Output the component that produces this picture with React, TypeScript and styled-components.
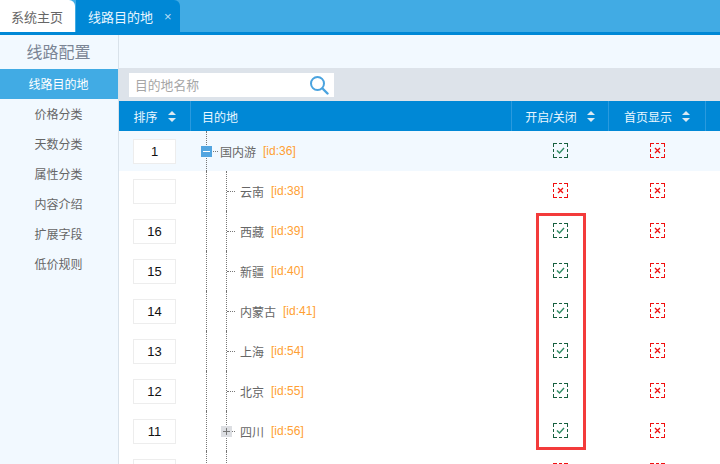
import React from "react";
import styled, { createGlobalStyle } from "styled-components";

const Global = createGlobalStyle`
  html, body { margin: 0; padding: 0; background: #fff; }
  body { font-family: "Liberation Sans", "Noto Sans CJK SC", sans-serif; }
`;

const Page = styled.div`
  position: relative;
  width: 720px;
  height: 464px;
  overflow: hidden;
  display: flex;
  flex-direction: column;
`;

const TabBar = styled.div`
  height: 32px;
  flex: none;
  display: flex;
  gap: 1px;
  background: #41abe4;
  border-bottom: 3px solid #0088d6;
`;

const Tab = styled.div<{ $active?: boolean }>`
  box-sizing: border-box;
  height: 32px;
  width: ${({ $active }) => ($active ? "104px" : "75px")};
  padding-left: ${({ $active }) => ($active ? "12px" : "11px")};
  display: flex;
  align-items: center;
  gap: 11px;
  font-size: 13px;
  border-radius: 0 6px 0 0;
  background: ${({ $active }) => ($active ? "#0088d6" : "#fff")};
  color: ${({ $active }) => ($active ? "#e8f6ff" : "#666")};
`;

const TabClose = styled.span`
  font-size: 13px;
  color: #b5ddf5;
`;

const Body = styled.div`
  flex: 1;
  display: flex;
  min-height: 0;
`;

const Sidebar = styled.div`
  width: 118px;
  flex: none;
  background: #f2f9ff;
  border-right: 1px solid #d9e2ea;
`;

const SideTitle = styled.div`
  height: 34px;
  line-height: 36px;
  padding-right: 1px;
  text-align: center;
  font-size: 16px;
  color: #7b8595;
`;

const SideItem = styled.div<{ $active?: boolean }>`
  height: 30px;
  line-height: 32px;
  padding-right: 1px;
  text-align: center;
  font-size: 12px;
  color: ${({ $active }) => ($active ? "#fff" : "#666")};
  background: ${({ $active }) => ($active ? "#41abe4" : "transparent")};
`;

const Main = styled.div`
  flex: 1;
  min-width: 0;
`;

const TopStrip = styled.div`
  height: 33px;
  background: #f2f9ff;
`;

const SearchBar = styled.div`
  height: 33px;
  box-sizing: border-box;
  padding: 5px 0 0 10px;
  background: #dde3ea;
`;

const SearchBox = styled.div`
  box-sizing: border-box;
  width: 205px;
  height: 24px;
  padding: 0 5px 0 6px;
  display: flex;
  align-items: center;
  justify-content: space-between;
  background: #fff;
  font-size: 12.8px;
  color: #a6a6a6;
`;

const Placeholder = styled.span`
  padding-bottom: 2px;
`;

const Grid = "72px 321px 97px 97px 1fr";

const HeadRow = styled.div`
  height: 30px;
  display: grid;
  grid-template-columns: ${Grid};
  background: #0088d6;
  color: #eaf7ff;
  font-size: 12px;
`;

const HeadCell = styled.div<{ $left?: boolean }>`
  box-sizing: border-box;
  display: flex;
  align-items: center;
  justify-content: ${({ $left }) => ($left ? "flex-start" : "center")};
  gap: 10px;
  padding-left: ${({ $left }) => ($left ? "11px" : "0")};
  border-right: 1px solid #2a9ade;
  &:last-child { border-right: 0; }
`;

const Row = styled.div<{ $shade?: boolean }>`
  height: 40px;
  flex: none;
  display: grid;
  grid-template-columns: ${Grid};
  align-items: center;
  background: ${({ $shade }) => ($shade ? "#f2f9ff" : "#fff")};
`;

const SortInput = styled.div`
  box-sizing: border-box;
  width: 43px;
  height: 25px;
  margin-left: 14px;
  background: #fff;
  border: 1px solid #ededed;
  text-align: center;
  line-height: 23px;
  font-size: 13px;
  color: #111;
`;

const TreeCell = styled.div<{ $depth: number }>`
  position: relative;
  height: 40px;
  display: flex;
  align-items: center;
  font-size: 12px;
  color: #666;
  padding-left: ${({ $depth }) => ($depth === 0 ? "29px" : "49px")};
  &::before {
    content: "";
    position: absolute;
    left: 15px;
    top: 0;
    bottom: 0;
    border-left: 1px dotted #777;
  }
  ${({ $depth }) =>
    $depth > 0 &&
    `&::after {
      content: "";
      position: absolute;
      left: 35px;
      top: 0;
      bottom: 0;
      border-left: 1px dotted #777;
    }`}
`;

const Branch = styled.span<{ $left: number }>`
  position: absolute;
  left: ${({ $left }) => $left}px;
  top: 20px;
  width: 8px;
  border-top: 1px dotted #777;
`;

const Toggle = styled.span<{ $open?: boolean; $left: number }>`
  position: absolute;
  z-index: 1;
  left: ${({ $left }) => $left}px;
  top: 15px;
  width: 11px;
  height: 11px;
  background: ${({ $open }) => ($open ? "#52a5e0" : "#dcdee2")};
  &::before, &::after {
    content: "";
    position: absolute;
    background: ${({ $open }) => ($open ? "#fff" : "#777")};
  }
  &::before { left: 2px; right: 2px; top: 5px; height: 1px; }
  &::after {
    display: ${({ $open }) => ($open ? "none" : "block")};
    top: 2px; bottom: 2px; left: 5px; width: 1px;
  }
`;

const NodeId = styled.span`
  margin-left: 7px;
  color: #ff9f33;
`;

const IconCell = styled.div`
  display: flex;
  justify-content: center;
  padding-bottom: 1px;
`;

const Highlight = styled.div`
  position: absolute;
  left: 536px;
  top: 213px;
  width: 50px;
  height: 237px;
  box-sizing: border-box;
  border: 3px solid #f33b3b;
`;

const SearchIcon = () => (
  <svg width="20" height="20" viewBox="0 0 20 20" fill="none" stroke="#4aa3df" strokeWidth="2">
    <circle cx="8.5" cy="8.5" r="6.5" />
    <path d="M13.5 13.5 L18.5 18.5" strokeLinecap="round" strokeWidth="2.4" />
  </svg>
);

const SortArrows = ({ color = "#dce9f2" }: { color?: string }) => (
  <svg width="8" height="11" viewBox="0 0 8 11" fill={color}>
    <path d="M4 0 L8 4 H0 Z M0 7 H8 L4 11 Z" />
  </svg>
);

const StatusBox = ({ on }: { on: boolean }) => {
  const color = on ? "#17603f" : "#f01010";
  return (
    <svg width="15" height="15" viewBox="0 0 15 15" fill="none">
      <path d="M0 .5H15 M14.5 0V15 M15 14.5H0 M.5 15V0" stroke={color} strokeDasharray="4 2 3 2 4 100" />
      {on ? (
        <path d="M4 7.5 L6.5 10 L11 5" stroke="#2e8b63" strokeWidth="1.4" />
      ) : (
        <path d="M5 5 L10 10 M10 5 L5 10" stroke="#f01010" strokeWidth="1.3" />
      )}
    </svg>
  );
};

type RowData = {
  sort: string;
  name: string;
  id?: number;
  depth: number;
  enabled: boolean;
  toggle?: "open" | "closed";
};

const rows: RowData[] = [
  { sort: "1", name: "国内游", id: 36, depth: 0, enabled: true, toggle: "open" },
  { sort: "", name: "云南", id: 38, depth: 1, enabled: false },
  { sort: "16", name: "西藏", id: 39, depth: 1, enabled: true },
  { sort: "15", name: "新疆", id: 40, depth: 1, enabled: true },
  { sort: "14", name: "内蒙古", id: 41, depth: 1, enabled: true },
  { sort: "13", name: "上海", id: 54, depth: 1, enabled: true },
  { sort: "12", name: "北京", id: 55, depth: 1, enabled: true },
  { sort: "11", name: "四川", id: 56, depth: 1, enabled: true, toggle: "closed" },
  { sort: "", name: "", depth: 1, enabled: false },
];

const sideItems = ["价格分类", "天数分类", "属性分类", "内容介绍", "扩展字段", "低价规则"];

const App = () => (
  <Page>
    <Global />
    <TabBar>
      <Tab>系统主页</Tab>
      <Tab $active>
        线路目的地
        <TabClose>×</TabClose>
      </Tab>
    </TabBar>
    <Body>
      <Sidebar>
        <SideTitle>线路配置</SideTitle>
        <SideItem $active>线路目的地</SideItem>
        {sideItems.map((item) => (
          <SideItem key={item}>{item}</SideItem>
        ))}
      </Sidebar>
      <Main>
        <TopStrip />
        <SearchBar>
          <SearchBox>
            <Placeholder>目的地名称</Placeholder>
            <SearchIcon />
          </SearchBox>
        </SearchBar>
        <HeadRow>
          <HeadCell>
            排序
            <SortArrows />
          </HeadCell>
          <HeadCell $left>目的地</HeadCell>
          <HeadCell>
            开启/关闭
            <SortArrows />
          </HeadCell>
          <HeadCell>
            首页显示
            <SortArrows />
          </HeadCell>
          <HeadCell />
        </HeadRow>
        {rows.map((row, i) => (
          <Row key={i} $shade={i === 0}>
            <SortInput>{row.sort}</SortInput>
            <TreeCell $depth={row.depth}>
              {row.name && <Branch $left={row.depth === 0 ? 19 : 36} />}
              {row.toggle === "open" && <Toggle $open $left={10} />}
              {row.toggle === "closed" && <Toggle $left={30} />}
              {row.name}
              {row.id && <NodeId>[id:{row.id}]</NodeId>}
            </TreeCell>
            <IconCell>
              <StatusBox on={row.enabled} />
            </IconCell>
            <IconCell>
              <StatusBox on={false} />
            </IconCell>
          </Row>
        ))}
      </Main>
    </Body>
    <Highlight />
  </Page>
);

export default App;
